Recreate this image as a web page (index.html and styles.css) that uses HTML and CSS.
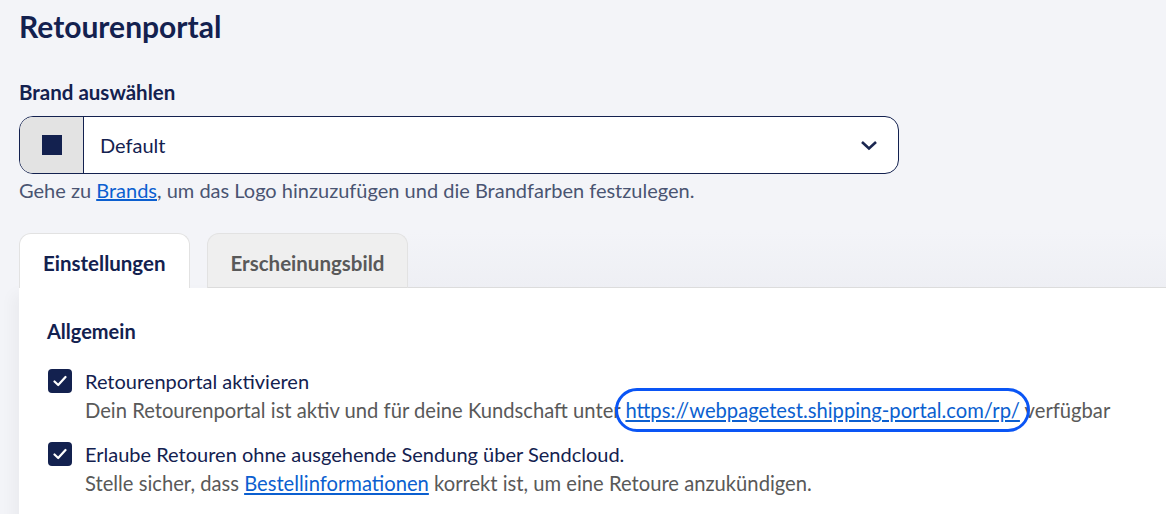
FILE: index.html
```html
<!DOCTYPE html>
<html>

<head>
	<meta name="viewport" content="width=device-width, initial-scale=1" />
	<link rel="stylesheet" href="styles.css">
</head>

<body>
	<h1 class="pageTitle">Retourenportal</h1>

	<div class="brandField">
		<label class="fieldLabel">Brand auswählen</label>
		<div class="brandSelect">
			<div class="brandSwatch"><span class="swatch"></span></div>
			<div class="brandValue">Default</div>
			<svg class="chevron" width="18" height="12" viewBox="0 0 18 12">
				<path d="M2 3 L9 9.5 L16 3" fill="none" stroke="#1b2750" stroke-width="2.6" />
			</svg>
		</div>
		<p class="fieldHelp">Gehe zu <a href="#">Brands</a>, um das Logo hinzuzufügen und die Brandfarben festzulegen.</p>
	</div>

	<div class="tabs">
		<div class="tab active">Einstellungen</div>
		<div class="tab">Erscheinungsbild</div>
		<div class="tabRest"></div>
	</div>

	<div class="panel">
		<h3 class="sectionTitle">Allgemein</h3>

		<div class="checkRow">
			<span class="checkbox">
				<svg width="14" height="12" viewBox="0 0 14 12">
					<path d="M1.5 6.5 L5.2 10 L12.5 2" fill="none" stroke="#fff" stroke-width="2.2" stroke-linecap="round" stroke-linejoin="round" />
				</svg>
			</span>
			<div class="checkText">
				<div class="checkLabel">Retourenportal aktivieren</div>
				<div class="checkHelp">Dein Retourenportal ist aktiv und für deine Kundschaft unter <a href="#" class="focusLink">https://webpagetest.shipping-portal.com/rp/</a> verfügbar</div>
			</div>
		</div>

		<div class="checkRow">
			<span class="checkbox">
				<svg width="14" height="12" viewBox="0 0 14 12">
					<path d="M1.5 6.5 L5.2 10 L12.5 2" fill="none" stroke="#fff" stroke-width="2.2" stroke-linecap="round" stroke-linejoin="round" />
				</svg>
			</span>
			<div class="checkText">
				<div class="checkLabel">Erlaube Retouren ohne ausgehende Sendung über Sendcloud.</div>
				<div class="checkHelp">Stelle sicher, dass <a href="#">Bestellinformationen</a> korrekt ist, um eine Retoure anzukündigen.</div>
			</div>
		</div>
	</div>
</body>

</html>
```

FILE: styles.css
```css
body {
	margin: 0;
	padding: 0 0 0 19px;
	background-color: #f3f4f8;
	font-family: "Source Sans Pro", Lato, "Liberation Sans", sans-serif;
	color: #13214f;
	overflow: hidden;
}

a {
	color: #0b5fd0;
	text-decoration: underline;
}

.pageTitle {
	margin: 0;
	padding-top: 8px;
	font-size: 30px;
	line-height: 36px;
	font-weight: 700;
	color: #13214f;
}

.brandField {
	margin-top: 35px;
	width: 880px;
}

.fieldLabel {
	display: block;
	font-size: 20.5px;
	line-height: 26px;
	font-weight: 700;
}

.brandSelect {
	display: flex;
	align-items: center;
	margin-top: 11px;
	height: 56px;
	border: 1px solid #13214f;
	border-radius: 14px;
	background-color: #fff;
	overflow: hidden;
}

.brandSwatch {
	display: flex;
	align-items: center;
	justify-content: center;
	width: 63px;
	height: 100%;
	background-color: #e3e3e3;
	border-right: 1px solid #13214f;
}

.swatch {
	width: 20px;
	height: 20px;
	background-color: #13214f;
}

.brandValue {
	flex: 1;
	padding-left: 16px;
	font-size: 20px;
}

.chevron {
	margin-right: 20px;
}

.fieldHelp {
	margin: 3px 0 0;
	font-size: 20px;
	line-height: 26px;
	color: #4a5472;
}

.tabs {
	display: flex;
	align-items: flex-end;
	margin-top: 30px;
	height: 55px;
}

.tab {
	box-sizing: border-box;
	height: 55px;
	padding: 0 23px;
	font-size: 20.5px;
	font-weight: 700;
	line-height: 58px;
	border: 1px solid #e2e2e2;
	border-bottom: 1px solid #dcdcdc;
	border-radius: 12px 12px 0 0;
	background-color: #efefef;
	color: #595959;
}

.tab.active {
	background-color: #fff;
	color: #13214f;
	margin-right: 17px;
	border-bottom: none;
}

.tabRest {
	flex: 1;
	height: 100%;
	border-bottom: 1px solid #dcdcdc;
	background: linear-gradient(to bottom, #f3f4f8, #eeeff4);
}

.panel {
	background-color: #fff;
	padding: 29px 28px 20px;
	box-shadow: -6px 6px 14px rgba(0, 0, 0, 0.04);
	min-height: 200px;
}

.sectionTitle {
	margin: 0 0 22px;
	font-size: 20px;
	line-height: 28px;
	font-weight: 700;
}

.checkRow {
	display: flex;
	align-items: flex-start;
	margin-bottom: 15px;
}

.checkbox {
	display: flex;
	align-items: center;
	justify-content: center;
	flex-shrink: 0;
	width: 24px;
	height: 24px;
	margin: 2px 13px 0 1px;
	background-color: #13214f;
	border-radius: 4px;
}

.checkLabel {
	font-size: 20px;
	line-height: 29px;
}

.checkHelp {
	font-size: 20.2px;
	line-height: 29px;
	color: #595959;
}

.focusLink {
	outline: 3.5px solid #0a55f5;
	outline-offset: 7px;
	border-radius: 16px;
}
```
